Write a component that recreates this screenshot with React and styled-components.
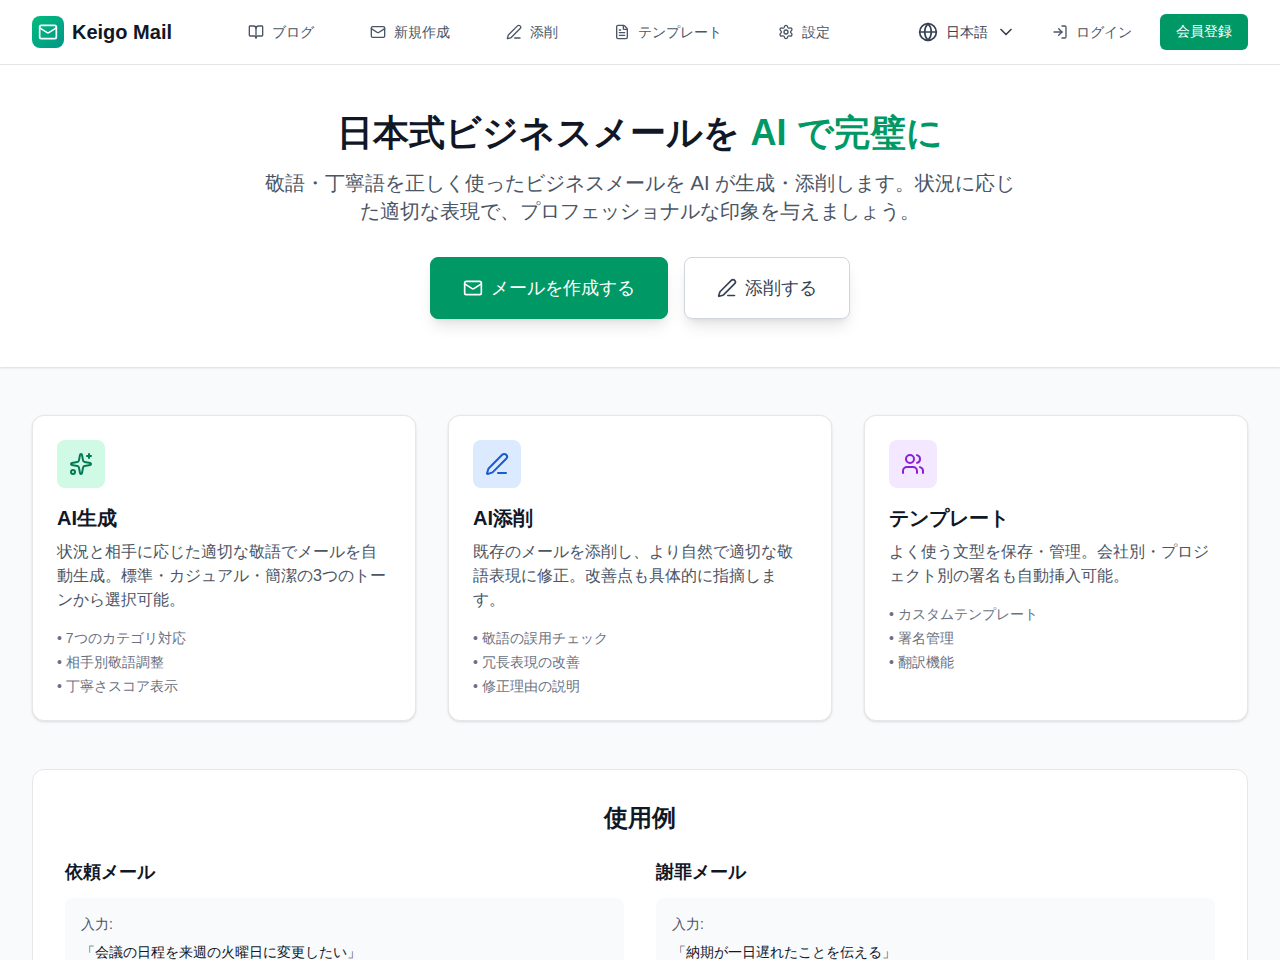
import React from "react";
import styled, { createGlobalStyle } from "styled-components";
import {
  BookOpen,
  ChevronDown,
  FileText,
  Globe,
  LogIn,
  Mail,
  PenLine,
  Settings,
  Sparkles,
  Users,
} from "lucide-react";

const GlobalStyle = createGlobalStyle`
  * { box-sizing: border-box; }
  html, body { margin: 0; padding: 0; }
  body {
    background: #f9fafb;
    color: #101828;
    font-family: "Liberation Sans", sans-serif;
  }
`;

const navLinks = [
  { label: "ブログ", icon: BookOpen },
  { label: "新規作成", icon: Mail },
  { label: "添削", icon: PenLine },
  { label: "テンプレート", icon: FileText },
  { label: "設定", icon: Settings },
];

const features = [
  {
    title: "AI生成",
    icon: Sparkles,
    bg: "#d0fae5",
    fg: "#007a55",
    text: "状況と相手に応じた適切な敬語でメールを自動生成。標準・カジュアル・簡潔の3つのトーンから選択可能。",
    points: ["7つのカテゴリ対応", "相手別敬語調整", "丁寧さスコア表示"],
  },
  {
    title: "AI添削",
    icon: PenLine,
    bg: "#dbeafe",
    fg: "#1a5bd4",
    text: "既存のメールを添削し、より自然で適切な敬語表現に修正。改善点も具体的に指摘します。",
    points: ["敬語の誤用チェック", "冗長表現の改善", "修正理由の説明"],
  },
  {
    title: "テンプレート",
    icon: Users,
    bg: "#f3e8ff",
    fg: "#8a1fd4",
    text: "よく使う文型を保存・管理。会社別・プロジェクト別の署名も自動挿入可能。",
    points: ["カスタムテンプレート", "署名管理", "翻訳機能"],
  },
];

const examples = [
  { title: "依頼メール", input: "「会議の日程を来週の火曜日に変更したい」" },
  { title: "謝罪メール", input: "「納期が一日遅れたことを伝える」" },
];

export default function App() {
  return (
    <div lang="ja">
      <GlobalStyle />
      <Header>
        <Brand>
          <LogoMark>
            <Mail size={20} color="#fff" />
          </LogoMark>
          <BrandName>Keigo Mail</BrandName>
        </Brand>
        <Nav>
          {navLinks.map(({ label, icon: Icon }) => (
            <NavLink key={label}>
              <Icon size={16} />
              {label}
            </NavLink>
          ))}
        </Nav>
        <Actions>
          <LangSelect>
            <Globe size={20} />
            日本語
            <ChevronDown size={20} />
          </LangSelect>
          <NavLink>
            <LogIn size={16} />
            ログイン
          </NavLink>
          <SignUp>会員登録</SignUp>
        </Actions>
      </Header>

      <Hero>
        <HeroTitle>
          日本式ビジネスメールを <em>AI で完璧に</em>
        </HeroTitle>
        <HeroText>
          敬語・丁寧語を正しく使ったビジネスメールを AI が生成・添削します。状況に応じた適切な表現で、プロフェッショナルな印象を与えましょう。
        </HeroText>
        <HeroButtons>
          <HeroButton $primary>
            <Mail size={20} />
            メールを作成する
          </HeroButton>
          <HeroButton>
            <PenLine size={20} />
            添削する
          </HeroButton>
        </HeroButtons>
      </Hero>

      <Main>
        <FeatureGrid>
          {features.map(({ title, icon: Icon, bg, fg, text, points }) => (
            <Card key={title}>
              <IconBox $bg={bg} $fg={fg}>
                <Icon size={24} />
              </IconBox>
              <CardTitle>{title}</CardTitle>
              <CardText>{text}</CardText>
              <PointList>
                {points.map((p) => (
                  <li key={p}>• {p}</li>
                ))}
              </PointList>
            </Card>
          ))}
        </FeatureGrid>

        <ExampleCard>
          <ExampleHeading>使用例</ExampleHeading>
          <ExampleGrid>
            {examples.map((ex) => (
              <div key={ex.title}>
                <ExampleTitle>{ex.title}</ExampleTitle>
                <ExampleBox>
                  <ExampleLabel>入力:</ExampleLabel>
                  <ExampleInput>{ex.input}</ExampleInput>
                </ExampleBox>
              </div>
            ))}
          </ExampleGrid>
        </ExampleCard>
      </Main>
    </div>
  );
}

const Header = styled.header`
  display: flex;
  align-items: center;
  justify-content: space-between;
  height: 65px;
  padding: 0 32px;
  background: #fff;
  border-bottom: 1px solid #e5e7eb;
`;

const Brand = styled.div`
  display: flex;
  align-items: center;
  gap: 8px;
`;

const LogoMark = styled.div`
  display: flex;
  align-items: center;
  justify-content: center;
  width: 32px;
  height: 32px;
  border-radius: 8px;
  background: linear-gradient(135deg, #00bc7d, #009689);
`;

const BrandName = styled.span`
  font-size: 20px;
  line-height: 28px;
  font-weight: 700;
`;

const Nav = styled.nav`
  display: flex;
  align-items: center;
  gap: 56px;
  margin-left: 76px;
`;

const NavLink = styled.a`
  display: flex;
  align-items: center;
  gap: 8px;
  font-size: 14px;
  line-height: 20px;
  color: #4a5565;
`;

const Actions = styled.div`
  display: flex;
  align-items: center;
  margin-left: auto;
  gap: 28px;
`;

const LangSelect = styled.div`
  display: flex;
  align-items: center;
  gap: 8px;
  margin-right: 8px;
  font-size: 14px;
  line-height: 20px;
  color: #364153;
`;

const SignUp = styled.button`
  height: 36px;
  padding: 0 16px;
  border: none;
  border-radius: 6px;
  background: #009966;
  color: #fff;
  font: inherit;
  font-size: 14px;
`;

const Hero = styled.section`
  display: flex;
  flex-direction: column;
  align-items: center;
  padding: 48px 32px;
  background: #fff;
  box-shadow: 0 1px 2px rgba(0, 0, 0, 0.12);
`;

const HeroTitle = styled.h1`
  margin: 0 0 16px;
  font-size: 36px;
  line-height: 40px;
  font-weight: 700;
  color: #101828;

  em {
    font-style: normal;
    color: #009966;
  }
`;

const HeroText = styled.p`
  max-width: 768px;
  margin: 0 0 32px;
  font-size: 20px;
  line-height: 28px;
  text-align: center;
  color: #4a5565;
`;

const HeroButtons = styled.div`
  display: flex;
  gap: 16px;
`;

const HeroButton = styled.button`
  display: flex;
  align-items: center;
  gap: 8px;
  padding: 16px 32px;
  border: 1px solid ${(p) => (p.$primary ? "#009966" : "#d1d5dc")};
  border-radius: 8px;
  background: ${(p) => (p.$primary ? "#009966" : "#fff")};
  color: ${(p) => (p.$primary ? "#fff" : "#364153")};
  font: inherit;
  font-size: 18px;
  line-height: 28px;
  box-shadow: 0 10px 15px -3px rgba(0, 0, 0, 0.1), 0 4px 6px -4px rgba(0, 0, 0, 0.1);
`;

const Main = styled.main`
  padding: 48px 32px;
`;

const FeatureGrid = styled.div`
  display: grid;
  grid-template-columns: repeat(3, 1fr);
  gap: 32px;
`;

const Card = styled.div`
  padding: 24px;
  border: 1px solid #e5e7eb;
  border-radius: 12px;
  background: #fff;
  box-shadow: 0 1px 3px rgba(0, 0, 0, 0.1), 0 1px 2px -1px rgba(0, 0, 0, 0.1);
`;

const IconBox = styled.div`
  display: flex;
  align-items: center;
  justify-content: center;
  width: 48px;
  height: 48px;
  border-radius: 8px;
  background: ${(p) => p.$bg};
  color: ${(p) => p.$fg};
`;

const CardTitle = styled.h3`
  margin: 16px 0 8px;
  font-size: 20px;
  line-height: 28px;
  font-weight: 700;
  color: #101828;
`;

const CardText = styled.p`
  margin: 0 0 16px;
  font-size: 16px;
  line-height: 24px;
  color: #4a5565;
`;

const PointList = styled.ul`
  display: flex;
  flex-direction: column;
  gap: 4px;
  margin: 0;
  padding: 0;
  list-style: none;
  font-size: 14px;
  line-height: 20px;
  color: #6a7282;
`;

const ExampleCard = styled.section`
  margin-top: 48px;
  padding: 32px;
  border: 1px solid #e5e7eb;
  border-radius: 12px;
  background: #fff;
`;

const ExampleHeading = styled.h2`
  margin: 0 0 24px;
  font-size: 24px;
  line-height: 32px;
  font-weight: 700;
  text-align: center;
  color: #101828;
`;

const ExampleGrid = styled.div`
  display: grid;
  grid-template-columns: repeat(2, 1fr);
  gap: 32px;
`;

const ExampleTitle = styled.h3`
  margin: 0 0 12px;
  font-size: 18px;
  line-height: 28px;
  font-weight: 600;
  color: #101828;
`;

const ExampleBox = styled.div`
  padding: 16px;
  border-radius: 8px;
  background: #f9fafb;
`;

const ExampleLabel = styled.p`
  margin: 0 0 8px;
  font-size: 14px;
  line-height: 20px;
  color: #4a5565;
`;

const ExampleInput = styled.p`
  margin: 0;
  font-size: 14px;
  line-height: 20px;
  color: #101828;
`;
